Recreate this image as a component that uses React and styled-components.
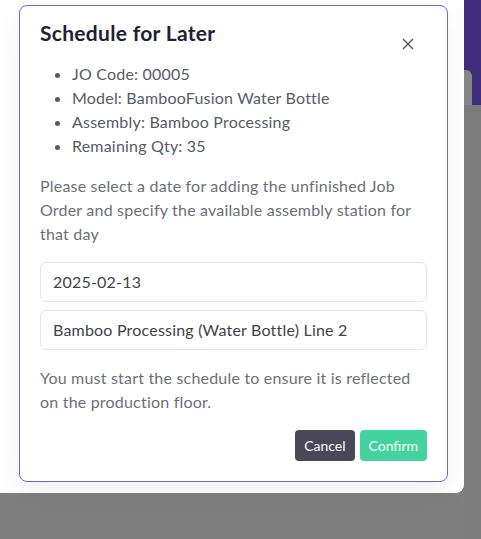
import React from "react";
import styled, { createGlobalStyle } from "styled-components";

const Global = createGlobalStyle`
  html, body { margin: 0; padding: 0; background: #7f7f7f; }
  body { font-family: "Lato", "Noto Sans", sans-serif; }
  #root { min-height: 539px; }
`;

const Page = styled.div`
  display: flex;
  align-items: flex-start;
  width: 481px;
  height: 539px;
  overflow: hidden;
`;

const Sheet = styled.div`
  width: 464px;
  height: 493px;
  flex: none;
  background: #ffffff;
  border-bottom-right-radius: 8px;
  box-shadow: 1px 0 0 #6a6a6a;
  padding: 5px 0 0 19px;
  box-sizing: border-box;
`;

const Side = styled.div`
  flex: 1;
  display: flex;
  flex-direction: column;
  height: 539px;
`;

const SideTop = styled.div`
  height: 70px;
  background: #3f2d7b;
`;

const SideRow = styled.div`
  display: flex;
  height: 35px;
  background: #3f2d7b;
`;

const SideCard = styled.div`
  width: 8px;
  background: #858585;
  border-top-right-radius: 6px;
`;

const SideRest = styled.div`
  flex: 1;
  background: #7c7c7c;
`;

const Modal = styled.div`
  width: 429px;
  box-sizing: border-box;
  background: #ffffff;
  border: 1px solid #7b5cf2;
  border-radius: 8px;
  padding: 12px 20px 20px 20px;
  box-shadow: 0 12px 30px rgba(0, 0, 0, 0.06);
  color: #4b5563;
  font-size: 16px;
  line-height: 24px;
  letter-spacing: 0.2px;
`;

const Header = styled.div`
  display: flex;
  justify-content: space-between;
  align-items: flex-start;
`;

const Title = styled.h2`
  margin: 0;
  font-size: 21px;
  line-height: 30px;
  font-weight: 700;
  letter-spacing: 0.3px;
  color: #1f2033;
`;

const Close = styled.button`
  border: none;
  background: none;
  padding: 0;
  margin: 19px 12px 0 0;
  width: 14px;
  height: 14px;
  display: flex;
  align-items: center;
  justify-content: center;
  cursor: pointer;
`;

const List = styled.ul`
  margin: 11px 0 0 0;
  padding: 0 0 0 32px;
  color: #555c68;
  li::marker { color: #555c68; }
`;

const Item = styled.li``;

const Text = styled.p`
  margin: ${(p) => p.$top}px 0 0 0;
  color: #6b6f78;
`;

const Field = styled.div`
  margin-top: ${(p) => p.$top}px;
  height: 40px;
  box-sizing: border-box;
  border: 1px solid #e4e3f3;
  border-radius: 6px;
  padding: 0 12px;
  display: flex;
  align-items: center;
  color: #3f434c;
`;

const Actions = styled.div`
  display: flex;
  justify-content: flex-end;
  gap: 5px;
  margin-top: 16px;
`;

const Button = styled.button`
  height: 31px;
  border: none;
  border-radius: 4px;
  padding: 0 ${(p) => p.$px}px;
  font-family: inherit;
  font-size: 14px;
  color: #ffffff;
  background: ${(p) => p.$bg};
  cursor: pointer;
`;

export default function App() {
  return (
    <>
      <Global />
      <Page>
        <Sheet>
          <Modal>
            <Header>
              <Title>Schedule for Later</Title>
              <Close aria-label="close">
                <svg width="12" height="12" viewBox="0 0 12 12">
                  <path d="M1 1 L11 11 M11 1 L1 11" stroke="#555555" strokeWidth="1.4" fill="none" />
                </svg>
              </Close>
            </Header>
            <List>
              <Item>JO Code: 00005</Item>
              <Item>Model: BambooFusion Water Bottle</Item>
              <Item>Assembly: Bamboo Processing</Item>
              <Item>Remaining Qty: 35</Item>
            </List>
            <Text $top={16}>
              Please select a date for adding the unfinished Job Order and specify the available
              assembly station for that day
            </Text>
            <Field $top={16}>2025-02-13</Field>
            <Field $top={8}>Bamboo Processing (Water Bottle) Line 2</Field>
            <Text $top={16}>
              You must start the schedule to ensure it is reflected on the production floor.
            </Text>
            <Actions>
              <Button $bg="#4a4858" $px={9}>Cancel</Button>
              <Button $bg="#44d39e" $px={9}>Confirm</Button>
            </Actions>
          </Modal>
        </Sheet>
        <Side>
          <SideTop />
          <SideRow>
            <SideCard />
          </SideRow>
          <SideRest />
        </Side>
      </Page>
    </>
  );
}
